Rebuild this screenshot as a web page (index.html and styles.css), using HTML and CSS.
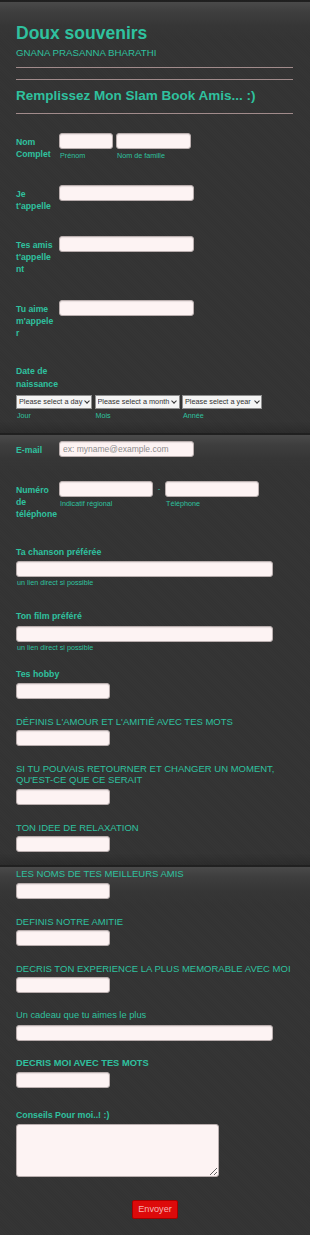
FILE: index.html
```html
<!DOCTYPE html>
<html lang="fr">
<head>
<meta charset="utf-8">
<title>Doux souvenirs</title>
<link rel="stylesheet" href="styles.css">
</head>
<body>
<form class="form">
  <section class="page page-1">
    <header class="head">
      <h1 class="title">Doux souvenirs</h1>
      <div class="subtitle">GNANA PRASANNA BHARATHI</div>
    </header>
    <h2 class="intro">Remplissez Mon Slam Book Amis... :)</h2>

    <div class="row-left r-name">
      <label class="lbl">Nom<br>Complet</label>
      <div class="combo">
        <div class="sub-field"><input class="inp w54" type="text"><span class="sublbl">Prénom</span></div>
        <div class="sub-field"><input class="inp w74" type="text"><span class="sublbl">Nom de famille</span></div>
      </div>
    </div>

    <div class="row-left r-two">
      <label class="lbl">Je<br>t'appelle</label>
      <input class="inp w135" type="text">
    </div>

    <div class="row-left r-three">
      <label class="lbl">Tes amis<br>t'appelle<br>nt</label>
      <input class="inp w135" type="text">
    </div>

    <div class="row-left r-four">
      <label class="lbl">Tu aime<br>m'appele<br>r</label>
      <input class="inp w135" type="text">
    </div>

    <div class="row-date">
      <label class="lbl lbl-date">Date de<br>naissance</label>
      <div class="selects">
        <div class="sub-field">
          <span class="sel-wrap"><select class="sel w76"><option>Please select a day</option></select></span>
          <span class="sublbl">Jour</span>
        </div>
        <div class="sub-field">
          <span class="sel-wrap"><select class="sel w85"><option>Please select a month</option></select></span>
          <span class="sublbl">Mois</span>
        </div>
        <div class="sub-field">
          <span class="sel-wrap"><select class="sel w80"><option>Please select a year</option></select></span>
          <span class="sublbl">Année</span>
        </div>
      </div>
    </div>
  </section>

  <section class="page page-2">
    <div class="row-left r-mail">
      <label class="lbl">E-mail</label>
      <input class="inp w135 mail" type="email" placeholder="ex: myname@example.com">
    </div>

    <div class="row-left r-phone">
      <label class="lbl">Numéro<br>de<br>téléphone</label>
      <div class="combo">
        <div class="sub-field"><input class="inp w94" type="text"><span class="sublbl">Indicatif régional</span></div>
        <span class="dash">-</span>
        <div class="sub-field"><input class="inp w94" type="text"><span class="sublbl">Téléphone</span></div>
      </div>
    </div>

    <div class="field f-song">
      <label class="tlbl">Ta chanson préférée</label>
      <input class="inp wfull" type="text">
      <span class="sublbl">un lien direct si possible</span>
    </div>

    <div class="field">
      <label class="tlbl">Ton film préféré</label>
      <input class="inp wfull" type="text">
      <span class="sublbl">un lien direct si possible</span>
    </div>

    <div class="field">
      <label class="tlbl">Tes hobby</label>
      <input class="inp w94" type="text">
    </div>

    <div class="field">
      <label class="tlbl caps">DÉFINIS L'AMOUR ET L'AMITIÉ AVEC TES MOTS</label>
      <input class="inp w94" type="text">
    </div>

    <div class="field">
      <label class="tlbl caps">SI TU POUVAIS RETOURNER ET CHANGER UN MOMENT,<br>QU'EST-CE QUE CE SERAIT</label>
      <input class="inp w94" type="text">
    </div>

    <div class="field last">
      <label class="tlbl caps">TON IDEE DE RELAXATION</label>
      <input class="inp w94" type="text">
    </div>
  </section>

  <section class="page page-3">
    <div class="field">
      <label class="tlbl caps">LES NOMS DE TES MEILLEURS AMIS</label>
      <input class="inp w94" type="text">
    </div>

    <div class="field">
      <label class="tlbl caps">DEFINIS NOTRE AMITIE</label>
      <input class="inp w94" type="text">
    </div>

    <div class="field">
      <label class="tlbl caps">DECRIS TON EXPERIENCE LA PLUS MEMORABLE AVEC MOI</label>
      <input class="inp w94" type="text">
    </div>

    <div class="field">
      <label class="tlbl reg">Un cadeau que tu aimes le plus</label>
      <input class="inp wfull" type="text">
    </div>

    <div class="field f-moi">
      <label class="tlbl capsb">DECRIS MOI AVEC TES MOTS</label>
      <input class="inp w94" type="text">
    </div>

    <div class="field last">
      <label class="tlbl">Conseils Pour moi..! :)</label>
      <textarea class="area"></textarea>
    </div>

    <div class="actions">
      <button class="btn" type="button">Envoyer</button>
    </div>
  </section>
</form>
</body>
</html>
```

FILE: styles.css
```css
* { box-sizing: border-box; }

html, body {
  margin: 0;
  padding: 0;
  background: #333333;
}

body {
  font-family: "Liberation Sans", Arial, sans-serif;
  color: #2fc19f;
}

.form { margin: 0; }

.page {
  padding: 0 17px 0 16px;
  background:
    linear-gradient(to bottom, #1f1f1f 0, #222222 2px, #4a4a4a 2px, #3e3e3e 12px, #363636 26px, rgba(51,51,51,0) 40px),
    repeating-linear-gradient(45deg, rgba(255,255,255,0.012) 0 1px, rgba(0,0,0,0) 1px 2px),
    #333333;
}

.page-1, .page-2 {
  background:
    linear-gradient(to top, rgba(0,0,0,0.16), rgba(0,0,0,0) 12px),
    linear-gradient(to bottom, #1f1f1f 0, #222222 2px, #4a4a4a 2px, #3e3e3e 12px, #363636 26px, rgba(51,51,51,0) 40px),
    repeating-linear-gradient(45deg, rgba(255,255,255,0.012) 0 1px, rgba(0,0,0,0) 1px 2px),
    #333333;
}

.page-1 { padding-top: 23px; padding-bottom: 13px; }
.page-2 { padding-top: 8.6px; padding-bottom: 13.3px; }
.page-3 { padding-top: 3.2px; padding-bottom: 16px; }

/* header */
.title {
  margin: 0;
  font-size: 17.5px;
  line-height: 20px;
  font-weight: bold;
}
.subtitle {
  margin-top: 4px;
  font-size: 9.7px;
  line-height: 12px;
  padding-bottom: 7.5px;
  border-bottom: 1px solid #a18b8b;
}
.intro {
  margin: 11px 0 0;
  padding: 8.5px 0;
  border-top: 1px solid #a18b8b;
  border-bottom: 1px solid #a18b8b;
  font-size: 13.5px;
  line-height: 16px;
  font-weight: bold;
}

/* left-label rows */
.row-left {
  display: flex;
  align-items: flex-start;
}
.lbl {
  flex: none;
  width: 43px;
  margin-top: 2.6px;
  font-size: 8.7px;
  line-height: 12px;
  font-weight: bold;
  white-space: nowrap;
}
.r-name { margin-top: 19.8px; }
.r-two { margin-top: 24.5px; }
.r-three { margin-top: 24.5px; }
.r-four { margin-top: 25.5px; }
.row-date { margin-top: 26.6px; }
.lbl-date { display: block; margin-top: 0; line-height: 12.5px; }

.r-mail { margin-top: 0; }
.r-phone { margin-top: 23.6px; }

.combo {
  display: flex;
  align-items: flex-start;
  gap: 3px;
}
.sub-field {
  display: flex;
  flex-direction: column;
  align-items: flex-start;
}
.sublbl {
  display: block;
  margin-top: 2.2px;
  padding-left: 1px;
  font-size: 7.2px;
  line-height: 9px;
}
.dash {
  width: 6px;
  text-align: center;
  font-size: 8px;
  line-height: 16px;
  color: #2fc19f;
}

/* inputs */
.inp {
  display: block;
  height: 16px;
  margin: 0;
  padding: 0 3px;
  border: 1px solid #b9aeae;
  border-radius: 3px;
  background: #fdf3f3;
  box-shadow: inset 0 1px 1px rgba(0,0,0,0.08);
  font-family: "Liberation Sans", Arial, sans-serif;
  font-size: 8.5px;
  color: #333;
}
.inp::placeholder { color: #8c8c8c; }
.w54 { width: 54px; }
.w74 { width: 75px; }
.w94 { width: 94px; }
.w135 { width: 135px; }
.wfull { width: 257px; }

.selects {
  display: flex;
  align-items: flex-start;
  gap: 2.5px;
  margin-top: 4.2px;
}
.sel-wrap {
  position: relative;
  display: block;
}
.sel-wrap::after {
  content: "";
  position: absolute;
  right: 3.5px;
  top: 4px;
  width: 3px;
  height: 3px;
  border-right: 1px solid #333;
  border-bottom: 1px solid #333;
  transform: rotate(45deg);
  pointer-events: none;
}
.sel {
  display: block;
  -webkit-appearance: none;
  appearance: none;
  height: 14.5px;
  margin: 0;
  padding: 0 8px 0 2px;
  border: 1px solid #8f8f8f;
  border-radius: 0;
  background-color: #f4f4f4;
  color: #333;
  font-family: "Liberation Sans", Arial, sans-serif;
  font-size: 7.3px;
  line-height: 12px;
}
.w76 { width: 76px; }
.w85 { width: 85px; }
.w80 { width: 80px; }
.selects .sublbl { margin-top: 1.7px; }

/* top-label fields */
.r-phone + .field { margin-top: 27px; }
.field { margin-bottom: 16.9px; }
.page-3 .field { margin-bottom: 17px; }
.field.last { margin-bottom: 0; }
.f-song { margin-bottom: 24px; }
.field .sublbl { margin-top: 1.5px; padding-left: 1px; }
.page-3 .f-moi { margin-bottom: 22px; }

.tlbl {
  display: block;
  margin-bottom: 3.3px;
  font-size: 8.8px;
  line-height: 11px;
  font-weight: bold;
  white-space: nowrap;
}
.tlbl.caps {
  font-size: 9.5px;
  font-weight: normal;
}
.tlbl.capsb {
  font-size: 9.3px;
  font-weight: bold;
}
.tlbl.reg {
  font-size: 9.3px;
  font-weight: normal;
}

.area {
  display: block;
  width: 203px;
  height: 52.5px;
  margin: 0;
  padding: 3px;
  border: 1px solid #b9aeae;
  border-radius: 3px;
  background: #fdf3f3;
  font-family: "Liberation Sans", Arial, sans-serif;
  font-size: 9px;
}

.actions {
  display: flex;
  justify-content: center;
  padding-top: 23.5px;
  margin-left: -16px;
  margin-right: -17px;
}
.btn {
  width: 46px;
  height: 18.6px;
  padding: 0;
  border: 1px solid #a30000;
  border-radius: 2px;
  background: #dd0a0a;
  color: #f5b3b3;
  font-family: "Liberation Sans", Arial, sans-serif;
  font-size: 9.2px;
  line-height: 16px;
}
```
